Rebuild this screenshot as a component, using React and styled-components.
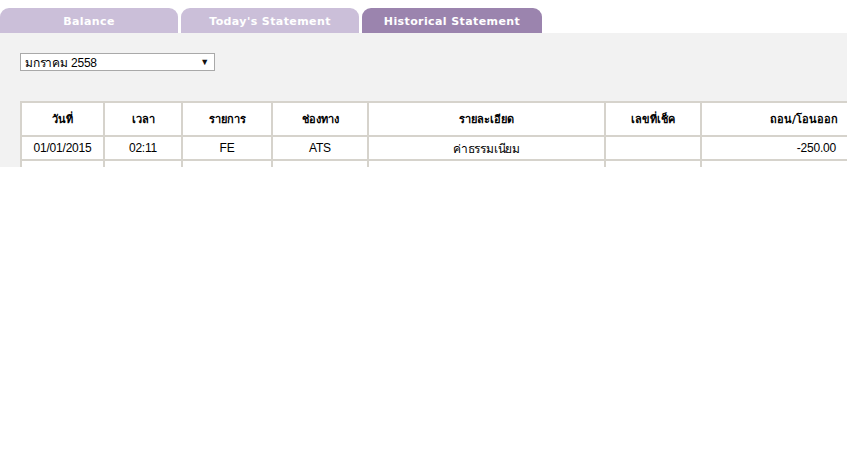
import React from 'react'
import styled, { createGlobalStyle } from 'styled-components'

const GlobalStyle = createGlobalStyle`
  html, body {
    margin: 0;
    padding: 0;
    background: #ffffff;
    overflow: hidden;
  }
`

const columns = [
  { title: 'วันที่', width: 83, align: 'center' },
  { title: 'เวลา', width: 78, align: 'center' },
  { title: 'รายการ', width: 90, align: 'center' },
  { title: 'ช่องทาง', width: 96, align: 'center' },
  { title: 'รายละเอียด', width: 237, align: 'center' },
  { title: 'เลขที่เช็ค', width: 96, align: 'center' },
  { title: 'ถอน/โอนออก', width: 150, align: 'right' },
]

const rows = [
  ['01/01/2015', '02:11', 'FE', 'ATS', 'ค่าธรรมเนียม', '', '-250.00'],
  ['', '', '', '', '', '', ''],
]

function App() {
  return (
    <Page>
      <GlobalStyle />
      <Tabs>
        <Tab>Balance</Tab>
        <Tab>Today's Statement</Tab>
        <Tab active>Historical Statement</Tab>
      </Tabs>
      <Panel>
        <MonthSelect>
          <span>มกราคม 2558</span>
          <Arrow>▼</Arrow>
        </MonthSelect>
        <Table>
          <colgroup>
            {columns.map((c, i) => (
              <col key={i} style={{ width: c.width }} />
            ))}
          </colgroup>
          <thead>
            <tr>
              {columns.map((c, i) => (
                <Th key={i} align={c.align}>{c.title}</Th>
              ))}
            </tr>
          </thead>
          <tbody>
            {rows.map((r, ri) => (
              <tr key={ri}>
                {r.map((v, i) => (
                  <Td key={i} align={columns[i].align}>{v}</Td>
                ))}
              </tr>
            ))}
          </tbody>
        </Table>
      </Panel>
    </Page>
  )
}

const Page = styled.div`
  width: 847px;
  height: 452px;
  padding-top: 8px;
  box-sizing: border-box;
  background: #ffffff;
`

const Tabs = styled.div`
  display: flex;
  gap: 3px;
  height: 25px;
`

const Tab = styled.div`
  width: ${p => (p.active ? '180px' : '178px')};
  height: 25px;
  border-radius: 9px 9px 0 0;
  background: ${p => (p.active ? '#9b84ae' : '#cbbfd9')};
  color: #ffffff;
  font-family: "DejaVu Sans", Verdana, sans-serif;
  font-weight: bold;
  font-size: 11px;
  letter-spacing: 0.4px;
  display: flex;
  align-items: center;
  justify-content: center;
  padding-top: 1px;
  box-sizing: border-box;
`

const Panel = styled.div`
  height: 134px;
  overflow: hidden;
  background: #f2f2f2;
  padding: 20px 0 0 20px;
  box-sizing: border-box;
`

const MonthSelect = styled.div`
  width: 195px;
  height: 18px;
  box-sizing: border-box;
  border: 1px solid #a9a9a9;
  background: #ffffff;
  display: flex;
  align-items: center;
  justify-content: space-between;
  padding: 0 5px 0 4px;
  font-family: "Liberation Sans", Arial, sans-serif;
  font-size: 12px;
  letter-spacing: -0.2px;
  color: #000000;
`

const Arrow = styled.span`
  font-size: 9px;
  color: #111111;
`

const Table = styled.table`
  margin-top: 30px;
  border-collapse: collapse;
  table-layout: fixed;
  width: 830px;
  background: #ffffff;
`

const Th = styled.th`
  height: 32px;
  border: 2px solid #d6d3cc;
  padding: 0 ${p => (p.align === 'right' ? '12px' : '10px')};
  text-align: ${p => p.align};
  font-family: Tahoma, "DejaVu Sans", sans-serif;
  font-weight: bold;
  font-size: 11px;
  color: #000000;
`

const Td = styled.td`
  height: 22px;
  border: 2px solid #d6d3cc;
  padding: 0 ${p => (p.align === 'right' ? '14px' : '10px')};
  text-align: ${p => p.align};
  font-family: "Liberation Sans", Arial, sans-serif;
  font-size: 12px;
  letter-spacing: -0.2px;
  color: #000000;
`

export default App
